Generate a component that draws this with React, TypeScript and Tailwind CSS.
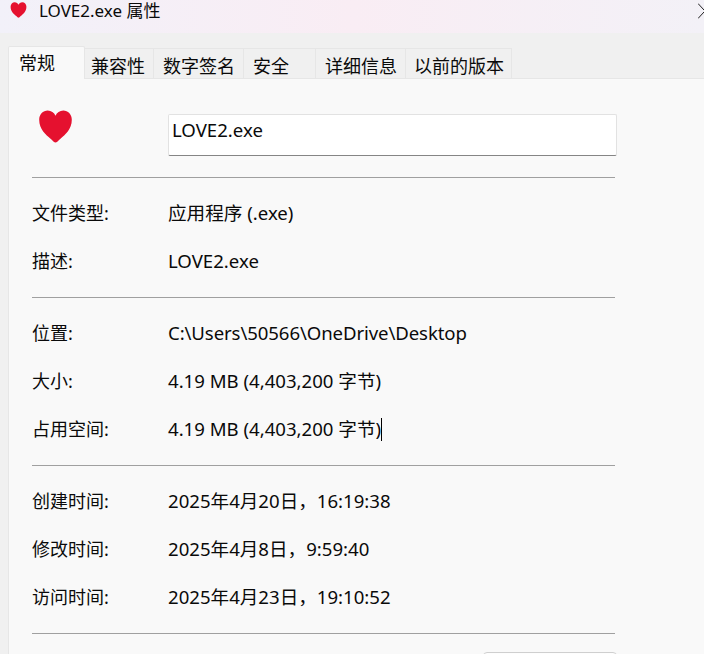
import React from "react";

const font = "font-['Noto_Sans','Noto_Sans_CJK_SC',sans-serif]";

function Heart({ className }: { className: string }): JSX.Element {
    return (
        <svg viewBox="0 0 34 34" className={className}>
            <path
                d="M17 33.6C15.8 33.6 14.2 31.8 11.6 29.4C7.4 25.6 0.2 20 0.2 10C0.2 4.2 4.2 0.4 9 0.4C12.6 0.4 15.6 2.6 17 5.8C18.4 2.6 21.4 0.4 25 0.4C29.8 0.4 33.8 4.2 33.8 10C33.8 20 26.6 25.6 22.4 29.4C19.8 31.8 18.2 33.6 17 33.6Z"
                fill="#e5112f"
            />
        </svg>
    );
}

const tabs = [
    { label: "兼容性", width: "w-[69px]", pad: "pl-[6px]" },
    { label: "数字签名", width: "w-[90px]", pad: "pl-[9px]" },
    { label: "安全", width: "w-[72px]", pad: "pl-[9px]" },
    { label: "详细信息", width: "w-[90px]", pad: "pl-[9px]" },
    { label: "以前的版本", width: "w-[106px]", pad: "pl-[8px]" },
];

function Row({ label, value, caret, tight }: { label: string; value: string; caret?: boolean; tight?: boolean }): JSX.Element {
    return (
        <div className="flex h-12 items-center">
            <div className="w-[136px]">{label}</div>
            <div className={`flex items-center text-[18.6px] ${tight ? "tracking-[-0.1px]" : ""}`}>
                {value}
                {caret && <span className="inline-block h-[23px] w-px bg-black" />}
            </div>
        </div>
    );
}

export default function App(): JSX.Element {
    return (
        <div className={`${font} h-[654px] w-[704px] overflow-hidden bg-[#f0f0f0] text-[18px] leading-6 text-[#0a0a0a]`}>
            <div className="flex h-[33px] items-start bg-gradient-to-r from-[#f2f1f9] via-[#f9edf4] to-[#f3f1f7] pl-[10px]">
                <Heart className="mt-[2px] h-[16px] w-[17px] shrink-0" />
                <span className="ml-[12px] text-[17px] leading-[21px]">LOVE2.exe 属性</span>
                <svg viewBox="0 0 6 16" className="ml-auto mt-[3px] h-4 w-[6px] text-[#222]">
                    <path d="M0 0.5L6 7M6 9L0 15.5" fill="none" stroke="currentColor" strokeWidth="1" />
                </svg>
            </div>

            <div className="flex h-[45px] items-end pl-2">
                <div className="z-10 mb-[-1px] h-[33px] w-[77px] rounded-t-[2px] border border-b-0 border-[#e6e6e6] bg-[#f9f9f9] pl-[10px] pt-1">
                    常规
                </div>
                {tabs.map((tab) => (
                    <div
                        key={tab.label}
                        className={`${tab.width} ${tab.pad} h-[30px] shrink-0 border-r border-t border-[#e6e6e6] pt-[5px]`}
                    >
                        {tab.label}
                    </div>
                ))}
            </div>

            <div className="ml-2 h-full border-l border-t border-[#e6e6e6] bg-[#f9f9f9] pl-[23px] pt-[30px]">
                <div className="flex h-[69px] w-[583px] items-start border-b border-[#a0a0a0]">
                    <Heart className="ml-[7px] mt-[1px] h-[33px] w-[33px] shrink-0 blur-[0.4px]" />
                    <div className="ml-[96px] mt-[5px] h-[42px] w-[449px] shrink-0 rounded-[2px] border border-[#e2e2e2] border-b-[#858585] bg-white pl-[3px] pt-[3px] text-[18.6px]">
                        LOVE2.exe
                    </div>
                </div>

                <div className="w-[583px] border-b border-[#a0a0a0] pb-3 pt-[11px]">
                    <Row label="文件类型:" value="应用程序 (.exe)" />
                    <Row label="描述:" value="LOVE2.exe" />
                </div>
                <div className="w-[583px] border-b border-[#a0a0a0] pb-3 pt-[11px]">
                    <Row label="位置:" value="C:\Users\50566\OneDrive\Desktop" tight />
                    <Row label="大小:" value="4.19 MB (4,403,200 字节)" />
                    <Row label="占用空间:" value="4.19 MB (4,403,200 字节)" caret />
                </div>
                <div className="w-[583px] border-b border-[#a0a0a0] pb-3 pt-[11px]">
                    <Row label="创建时间:" value="2025年4月20日，16:19:38" />
                    <Row label="修改时间:" value="2025年4月8日，9:59:40" />
                    <Row label="访问时间:" value="2025年4月23日，19:10:52" />
                </div>

                <div className="ml-[451px] mt-[18px] h-8 w-[134px] rounded-[4px] border border-[#cfcfcf] bg-[#fdfdfd]" />
            </div>
        </div>
    );
}
